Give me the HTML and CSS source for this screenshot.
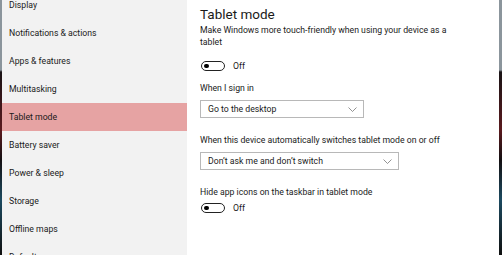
FILE: index.html
```html
<!DOCTYPE html>
<html lang="en">
<head>
    <meta charset="UTF-8">
    <title>Settings - Tablet mode</title>
    <link rel="stylesheet" href="styles.css">
</head>
<body>
    <div class="window">
        <ul class="sidebar">
            <li>Display</li>
            <li>Notifications &amp; actions</li>
            <li>Apps &amp; features</li>
            <li>Multitasking</li>
            <li class="active">Tablet mode</li>
            <li>Battery saver</li>
            <li>Power &amp; sleep</li>
            <li>Storage</li>
            <li>Offline maps</li>
            <li>Default apps</li>
        </ul>

        <div class="content">
            <h1>Tablet mode</h1>

            <p class="label">Make Windows more touch-friendly when using your device as a tablet</p>
            <div class="toggle-row first-toggle">
                <span class="toggle"></span>
                <span>Off</span>
            </div>

            <p class="label sign-in">When I sign in</p>
            <div class="select select-short">
                <span>Go to the desktop</span>
                <svg class="chevron" width="9" height="5" viewBox="0 0 9 5"><path d="M0.5 0.5 L4.5 4.5 L8.5 0.5" fill="none" stroke="#777" stroke-width="0.8"/></svg>
            </div>

            <p class="label switches">When this device automatically switches tablet mode on or off</p>
            <div class="select select-long">
                <span>Don’t ask me and don’t switch</span>
                <svg class="chevron" width="9" height="5" viewBox="0 0 9 5"><path d="M0.5 0.5 L4.5 4.5 L8.5 0.5" fill="none" stroke="#777" stroke-width="0.8"/></svg>
            </div>

            <p class="label hide-icons">Hide app icons on the taskbar in tablet mode</p>
            <div class="toggle-row">
                <span class="toggle"></span>
                <span>Off</span>
            </div>
        </div>
    </div>
</body>
</html>
```

FILE: styles.css
```css
body {
    margin: 0;
    height: 255px;
    overflow: hidden;
    font-family: Roboto, "Noto Sans", sans-serif;
    color: #1a1a1a;
    /* desktop behind the window */
    background: linear-gradient(to bottom, #8b959c 0, #8b959c 70px, #1a1416 72px, #5a1a1e 130px, #141012 160px, #1c4a60 200px, #101010 255px);
}

.window {
    display: flex;
    height: 255px;
    margin: 0 3px 0 2px;
    background: #fff;
}

.sidebar {
    list-style: none;
    width: 185px;
    height: 280px;
    margin: -9px 0 0 0;
    padding: 0;
    background: #f2f2f2;
    font-size: 8.7px;
}

.sidebar li {
    height: 28px;
    line-height: 28px;
    padding-left: 7px;
}

.sidebar .active {
    background: #e6a3a3;
}

.content {
    flex: 1;
    padding: 4px 0 0 13px;
    font-size: 8.7px;
}

h1 {
    margin: 0;
    font-size: 13.5px;
    font-weight: normal;
    line-height: 20px;
}

.label {
    margin: 0;
    width: 262px;
    line-height: 12px;
}

.toggle-row {
    display: flex;
    align-items: center;
    gap: 8px;
    margin-top: 4px;
    height: 12px;
}

.first-toggle {
    margin-top: 12px;
}

.toggle {
    position: relative;
    box-sizing: border-box;
    width: 24px;
    height: 10px;
    margin-left: 1px;
    border: 1.3px solid #222;
    border-radius: 6px;
}

.toggle::after {
    content: "";
    position: absolute;
    left: 2px;
    top: 1.5px;
    width: 4.5px;
    height: 4.5px;
    border-radius: 50%;
    background: #000;
}

.sign-in {
    margin-top: 10px;
}

.select {
    display: flex;
    align-items: center;
    justify-content: space-between;
    box-sizing: border-box;
    height: 18px;
    margin-top: 6px;
    padding: 0 6px 0 7px;
    border: 1px solid #b8b8b8;
}

.select-short {
    width: 164px;
}

.select-long {
    width: 199px;
}

.switches {
    margin-top: 16px;
}

.hide-icons {
    margin-top: 16px;
}
```
